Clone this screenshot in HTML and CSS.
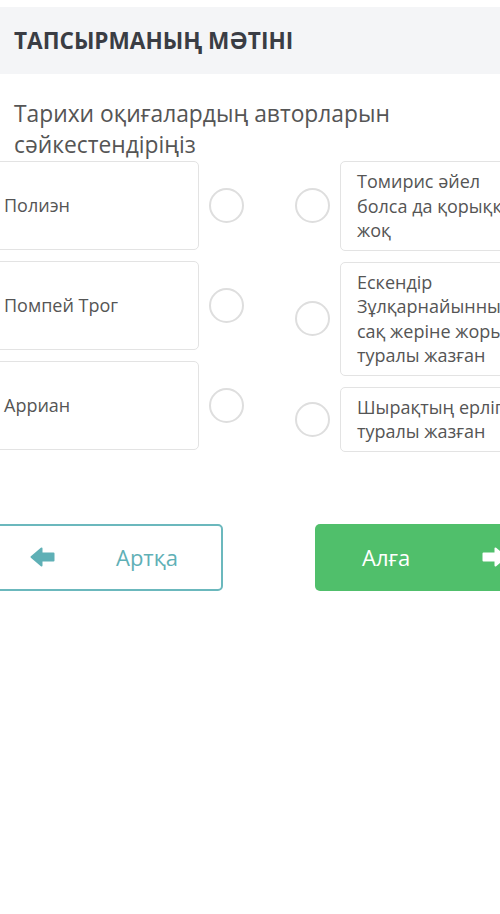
FILE: index.html
```html
<!DOCTYPE html>
<html lang="kk">
<head>
    <meta charset="UTF-8">
    <meta name="viewport" content="width=device-width, initial-scale=1.0">
    <title>Тапсырма</title>
    <link rel="stylesheet" href="styles.css">
</head>
<body>

    <div class="task-head">
        <h2>ТАПСЫРМАНЫҢ МӘТІНІ</h2>
    </div>

    <p class="question">Тарихи оқиғалардың авторларын сәйкестендіріңіз</p>

    <!-- Сәйкестендіру -->
    <div class="board">
        <div class="col col-left">
            <div class="row">
                <div class="card card-fixed">Полиэн</div>
                <span class="dot"></span>
            </div>
            <div class="row">
                <div class="card card-fixed">Помпей Трог</div>
                <span class="dot"></span>
            </div>
            <div class="row">
                <div class="card card-fixed">Арриан</div>
                <span class="dot"></span>
            </div>
        </div>

        <div class="col col-right">
            <div class="row">
                <span class="dot"></span>
                <div class="card card-wide">Томирис әйел<br>болса да қорыққаны жоқ</div>
            </div>
            <div class="row">
                <span class="dot"></span>
                <div class="card card-wide">Ескендір Зұлқарнайынның сақ жеріне жорығы туралы жазған</div>
            </div>
            <div class="row">
                <span class="dot"></span>
                <div class="card card-wide">Шырақтың ерлігі туралы жазған</div>
            </div>
        </div>
    </div>

    <!-- Навигация -->
    <div class="nav">
        <button type="button" class="btn btn-back">
            <svg class="arrow" width="25" height="20" viewBox="0 0 25 20">
                <path d="M1.5 10 L11.5 1.5 L11.5 6.5 L23.5 6.5 L23.5 13.5 L11.5 13.5 L11.5 18.5 Z" fill="currentColor" stroke="currentColor" stroke-width="2" stroke-linejoin="round"/>
            </svg>
            <span>Артқа</span>
        </button>
        <button type="button" class="btn btn-next">
            <span>Алға</span>
            <svg class="arrow" width="25" height="20" viewBox="0 0 25 20">
                <path d="M23.5 10 L13.5 1.5 L13.5 6.5 L1.5 6.5 L1.5 13.5 L13.5 13.5 L13.5 18.5 Z" fill="currentColor" stroke="currentColor" stroke-width="2" stroke-linejoin="round"/>
            </svg>
        </button>
    </div>

</body>
</html>
```

FILE: styles.css
```css
body {
    font-family: 'Open Sans', 'Noto Sans', sans-serif;
    background-color: #fff;
    margin: 0;
    padding: 0;
    overflow: hidden;
    color: #555;
}

.task-head {
    margin-top: 7px;
    height: 67px;
    background-color: #f4f5f7;
    display: flex;
    align-items: center;
    padding-left: 14px;
}

.task-head h2 {
    margin: 0;
    font-size: 22.6px;
    font-weight: 700;
    color: #3a3d44;
    line-height: 30px;
}

.question {
    margin: 24px 0 1px 14px;
    font-size: 22.8px;
    line-height: 31px;
    color: #555;
    width: 460px;
}

.board {
    display: flex;
    gap: 51px;
    margin-left: -13px;
    width: 660px;
}

.col {
    display: flex;
    flex-direction: column;
    gap: 11px;
}

.row {
    display: flex;
    align-items: center;
    gap: 10px;
}

.card {
    width: 212px;
    box-sizing: border-box;
    border: 1px solid #e3e3e3;
    border-radius: 5px;
    padding: 7px 16px;
    font-size: 18px;
    line-height: 24.5px;
    color: #555;
    background-color: #fff;
}

.card-fixed {
    height: 89px;
    display: flex;
    align-items: center;
}

.card-wide {
    width: 217px;
}

.dot {
    width: 35px;
    height: 35px;
    box-sizing: border-box;
    border: 2.5px solid #dedede;
    border-radius: 50%;
    flex-shrink: 0;
}

.nav {
    display: flex;
    gap: 92px;
    margin-left: -45px;
    margin-top: 72px;
    width: 628px;
}

.btn {
    width: 268px;
    height: 67px;
    box-sizing: border-box;
    border-radius: 5px;
    font-family: 'Open Sans', 'Noto Sans', sans-serif;
    font-size: 22px;
    display: flex;
    align-items: center;
    padding: 0;
    cursor: pointer;
}

.btn-back {
    background-color: #fff;
    border: 2px solid #6bb8bd;
    color: #5fb0b6;
    padding-left: 73px;
    gap: 61px;
}

.btn-next {
    background-color: #50bf6b;
    border: none;
    color: #fff;
    padding-left: 47px;
    gap: 72px;
}
```
